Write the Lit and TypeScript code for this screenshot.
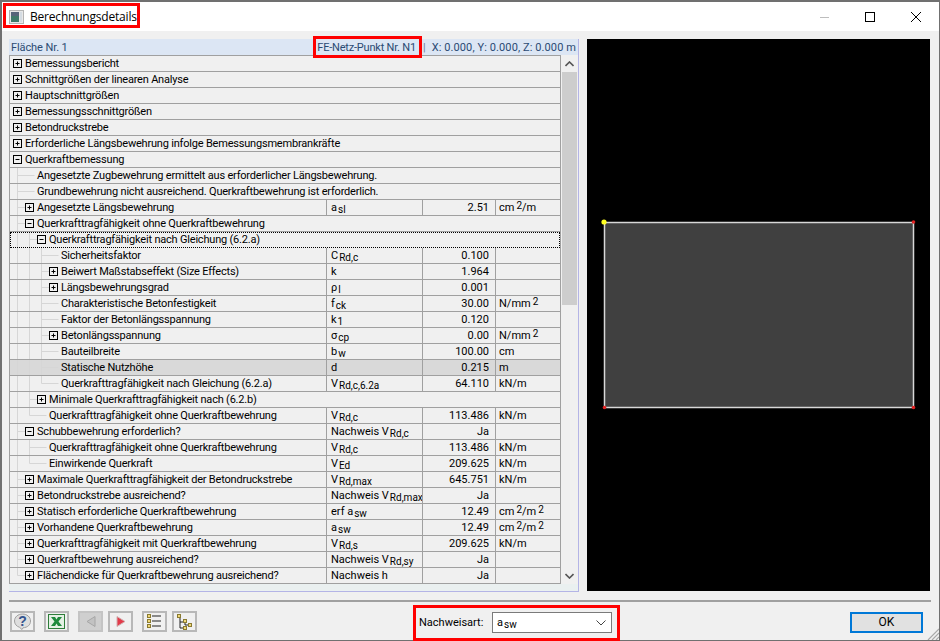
import { LitElement, html, css, svg, nothing } from "lit";
import { customElement } from "lit/decorators.js";

type Row = { l: number; t: string; e?: "+" | "-"; s?: string; sub?: string; v?: string; u?: any; hi?: boolean; focus?: boolean };

const cm2m = html`cm<sup>2</sup>/m`;
const cm2m2 = html`cm<sup>2</sup>/m<sup>2</sup>`;
const nmm2 = html`N/mm<sup>2</sup>`;

const ROWS: Row[] = [
  { l: 0, e: "+", t: "Bemessungsbericht" },
  { l: 0, e: "+", t: "Schnittgrößen der linearen Analyse" },
  { l: 0, e: "+", t: "Hauptschnittgrößen" },
  { l: 0, e: "+", t: "Bemessungsschnittgrößen" },
  { l: 0, e: "+", t: "Betondruckstrebe" },
  { l: 0, e: "+", t: "Erforderliche Längsbewehrung infolge Bemessungsmembrankräfte" },
  { l: 0, e: "-", t: "Querkraftbemessung" },
  { l: 1, t: "Angesetzte Zugbewehrung ermittelt aus erforderlicher Längsbewehrung." },
  { l: 1, t: "Grundbewehrung nicht ausreichend. Querkraftbewehrung ist erforderlich." },
  { l: 1, e: "+", t: "Angesetzte Längsbewehrung", s: "a", sub: "sl", v: "2.51", u: cm2m },
  { l: 1, e: "-", t: "Querkrafttragfähigkeit ohne Querkraftbewehrung" },
  { l: 2, e: "-", t: "Querkrafttragfähigkeit nach Gleichung (6.2.a)", focus: true },
  { l: 3, t: "Sicherheitsfaktor", s: "C", sub: "Rd,c", v: "0.100" },
  { l: 3, e: "+", t: "Beiwert Maßstabseffekt (Size Effects)", s: "k", v: "1.964" },
  { l: 3, e: "+", t: "Längsbewehrungsgrad", s: "ρ", sub: "l", v: "0.001" },
  { l: 3, t: "Charakteristische Betonfestigkeit", s: "f", sub: "ck", v: "30.00", u: nmm2 },
  { l: 3, t: "Faktor der Betonlängsspannung", s: "k", sub: "1", v: "0.120" },
  { l: 3, e: "+", t: "Betonlängsspannung", s: "σ", sub: "cp", v: "0.00", u: nmm2 },
  { l: 3, t: "Bauteilbreite", s: "b", sub: "w", v: "100.00", u: "cm" },
  { l: 3, t: "Statische Nutzhöhe", s: "d", v: "0.215", u: "m", hi: true },
  { l: 3, t: "Querkrafttragfähigkeit nach Gleichung (6.2.a)", s: "V", sub: "Rd,c,6.2a", v: "64.110", u: "kN/m" },
  { l: 2, e: "+", t: "Minimale Querkrafttragfähigkeit nach (6.2.b)" },
  { l: 2, t: "Querkrafttragfähigkeit ohne Querkraftbewehrung", s: "V", sub: "Rd,c", v: "113.486", u: "kN/m" },
  { l: 1, e: "-", t: "Schubbewehrung erforderlich?", s: "Nachweis V", sub: "Rd,c", v: "Ja" },
  { l: 2, t: "Querkrafttragfähigkeit ohne Querkraftbewehrung", s: "V", sub: "Rd,c", v: "113.486", u: "kN/m" },
  { l: 2, t: "Einwirkende Querkraft", s: "V", sub: "Ed", v: "209.625", u: "kN/m" },
  { l: 1, e: "+", t: "Maximale Querkrafttragfähigkeit der Betondruckstrebe", s: "V", sub: "Rd,max", v: "645.751", u: "kN/m" },
  { l: 1, e: "+", t: "Betondruckstrebe ausreichend?", s: "Nachweis V", sub: "Rd,max", v: "Ja" },
  { l: 1, e: "+", t: "Statisch erforderliche Querkraftbewehrung", s: "erf a", sub: "sw", v: "12.49", u: cm2m2 },
  { l: 1, e: "+", t: "Vorhandene Querkraftbewehrung", s: "a", sub: "sw", v: "12.49", u: cm2m2 },
  { l: 1, e: "+", t: "Querkrafttragfähigkeit mit Querkraftbewehrung", s: "V", sub: "Rd,s", v: "209.625", u: "kN/m" },
  { l: 1, e: "+", t: "Querkraftbewehrung ausreichend?", s: "Nachweis V", sub: "Rd,sy", v: "Ja" },
  { l: 1, e: "+", t: "Flächendicke für Querkraftbewehrung ausreichend?", s: "Nachweis h", v: "Ja" },
];

function continues(i: number, k: number): boolean {
  for (let j = i + 1; j < ROWS.length; j++) {
    if (ROWS[j].l <= k) return false;
    if (ROWS[j].l === k + 1) return true;
  }
  return false;
}

function treeGlyph(i: number) {
  const r = ROWS[i];
  const w = 15 + 12 * r.l;
  const cx = 7.5 + 12 * r.l;
  const cy = 7.5;
  const parts: unknown[] = [];
  for (let k = 0; k < r.l; k++) {
    const x = 7.5 + 12 * k;
    const c = continues(i, k);
    if (c) parts.push(svg`<line x1=${x} x2=${x} y1="0" y2="15" stroke="#d6d6d6"/>`);
    else if (k === r.l - 1) parts.push(svg`<line x1=${x} x2=${x} y1="0" y2=${cy} stroke="#d6d6d6"/>`);
  }
  if (r.l > 0) {
    const end = r.e ? cx - 4 : cx + 5;
    parts.push(svg`<line x1=${cx - 12} x2=${end} y1=${cy} y2=${cy} stroke="#d6d6d6"/>`);
  }
  if (r.e) {
    parts.push(svg`<rect x=${cx - 4} y=${cy - 4} width="8" height="8" fill="#f0f0f0" stroke="#000"/>`);
    parts.push(svg`<line x1=${cx - 2} x2=${cx + 2} y1=${cy} y2=${cy} stroke="#000"/>`);
    if (r.e === "+") parts.push(svg`<line x1=${cx} x2=${cx} y1=${cy - 2} y2=${cy + 2} stroke="#000"/>`);
  }
  return html`<svg class="glyph" width=${w} height="15" viewBox="0 0 ${w} 15">${parts}</svg>`;
}

@customElement("app-root")
export class AppRoot extends LitElement {
  static styles = css`
    :host { display: block; width: 940px; height: 641px; font-family: Roboto, "Liberation Sans", Arial, sans-serif; font-size: 11px; color: #000; }
    .window { box-sizing: border-box; width: 940px; height: 641px; border: 1px solid #707070; border-left-width: 2px; border-top-width: 2px; background: #f0f0f0; display: flex; flex-direction: column; position: relative; }
    .titlebar { height: 29px; flex: none; background: #fff; display: flex; align-items: center; }
    .ticon { margin-left: 7px; margin-right: 6px; flex: none; }
    .ttext { font-family: "Open Sans", sans-serif; font-size: 12px; letter-spacing: -0.2px; }
    .winbtns { margin-left: auto; display: flex; align-items: center; }
    .winbtn { width: 46px; height: 29px; display: flex; align-items: center; justify-content: center; }
    .main { flex: none; height: 553px; margin-top: 8px; display: flex; gap: 8px; padding-left: 7px; }
    .panel { width: 570px; flex: none; box-sizing: border-box; border-right: 1px solid #b4b4e6; border-bottom: 1px solid #b4b4e6; background: #eaf0f0; display: flex; flex-direction: column; }
    .phead { height: 16px; flex: none; background: #dce6f4; color: #2b4a73; display: flex; align-items: center; padding: 0 2px; white-space: pre; }
    .phead .left { letter-spacing: -0.1px; }
    .phead .right { margin-left: auto; letter-spacing: -0.2px; }
    .phead .sep { color: #6d7c92; margin: 0 6px 0 7px; }
    .phead .coords { letter-spacing: 0.1px; }
    .grid { display: flex; height: 529px; flex: none; background: #f0f0f0; }
    .table { width: 552px; flex: none; box-sizing: border-box; border: 1px solid #a0a0a0; border-bottom: 0; }
    .row { height: 16px; box-sizing: border-box; border-bottom: 1px solid #a0a0a0; display: grid; grid-template-columns: 317px 96px 73px 64px; white-space: nowrap; line-height: 15px; }
    .row.span { display: flex; }
    .row.hi { background: #d9d9d9; }
    .row.focus { outline: 1px dotted #000; outline-offset: -1px; border-bottom-color: transparent; }
    .cell { box-sizing: border-box; height: 15px; border-right: 1px solid #a0a0a0; }
    .cell:last-child { border-right: 0; }
    .tree { display: flex; align-items: flex-start; border-right: 1px solid #a0a0a0; letter-spacing: -0.2px; }
    .row.span .tree { border-right: 0; flex: 1; }
    .glyph { flex: none; display: block; }
    .sym { padding-left: 4px; overflow: hidden; }
    .sym sub, .combo sub { font-size: 10px; vertical-align: baseline; position: relative; top: 2px; margin-left: 1px; line-height: 0; }
    .val { text-align: right; padding-right: 6px; }
    .unit { padding-left: 3px; }
    sup { font-size: 10px; vertical-align: baseline; position: relative; top: -2px; margin-left: 2px; line-height: 0; }
    .scroll { width: 17px; flex: none; box-sizing: border-box; display: flex; flex-direction: column; align-items: stretch; padding: 0 1px; }
    .arrow { height: 17px; flex: none; display: flex; align-items: center; justify-content: center; }
    .thumb { height: 233px; flex: none; background: #cdcdcd; }
    .track { flex: 1; }
    .canvas { width: 343px; height: 552px; flex: none; background: #000; display: block; }
    .rule { flex: none; margin: 8px 8px 0 7px; border-top: 2px solid #a0a0a0; height: 0; }
    .footer { flex: 1; display: flex; align-items: flex-start; padding: 9px 16px 0 8px; position: relative; }
    .tools { display: flex; gap: 9px; }
    .tbtn { box-sizing: border-box; width: 25px; height: 21px; border: 2px solid #b8b8b8; background: #f0f0f0; display: flex; align-items: center; justify-content: center; }
    .tbtn.off { background: #cfcfcf; border-color: #c4c4c4; }
    .group { display: flex; gap: 5px; }
    .nach { margin-left: 222px; display: flex; align-items: center; height: 21px; margin-top: 1px; }
    .nach .label { width: 73px; flex: none; }
    .combo { box-sizing: border-box; width: 120px; height: 21px; border: 1px solid #7a7a7a; background: #fff; display: flex; align-items: center; padding: 0 5px 0 4px; line-height: 15px; }
    .combo svg { margin-left: auto; }
    .ok { box-sizing: border-box; margin-left: auto; width: 73px; height: 21px; margin-top: 1px; border: 2px solid #0078d7; background: #e1e1e1; text-align: center; line-height: 17px; font-size: 12px; }
    .grip { position: absolute; right: 0; bottom: 0; display: block; }
    .red { position: absolute; box-sizing: border-box; border: 3px solid #f00; pointer-events: none; }
    .red.a { left: 1px; top: 1px; width: 137px; height: 25px; }
    .red.b { left: 311px; top: 34px; width: 109px; height: 22px; }
    .red.c { left: 411px; top: 603px; width: 207px; height: 36px; }
  `;

  private renderRow(r: Row, i: number) {
    const cls = `row ${r.s || r.v ? "" : "span"} ${r.hi ? "hi" : ""} ${r.focus ? "focus" : ""}`;
    const tree = html`<div class="cell tree">${treeGlyph(i)}<span>${r.t}</span></div>`;
    if (!r.s && !r.v) return html`<div class=${cls}>${tree}</div>`;
    return html`<div class=${cls}>
      ${tree}
      <div class="cell sym">${r.s}${r.sub ? html`<sub>${r.sub}</sub>` : nothing}</div>
      <div class="cell val">${r.v}</div>
      <div class="cell unit">${r.u ?? ""}</div>
    </div>`;
  }

  render() {
    return html`<div class="window">
      <div class="titlebar">
        <svg class="ticon" width="15" height="14" viewBox="0 0 15 14">
          <rect x="0.5" y="0.5" width="14" height="13" fill="#e8e8e8" stroke="#b4b4b4"/>
          <rect x="2" y="2" width="8" height="10" fill="#3f7a6a"/>
          <rect x="2" y="2" width="8" height="4" fill="#56657a"/>
          <rect x="11" y="2" width="2" height="10" fill="#d4dbe2"/>
        </svg>
        <span class="ttext">Berechnungsdetails</span>
        <div class="winbtns">
          <div class="winbtn"><svg width="10" height="10"><line x1="1" x2="11" y1="5.5" y2="5.5" stroke="#bdbdbd"/></svg></div>
          <div class="winbtn"><svg width="10" height="10"><rect x="0.5" y="0.5" width="9" height="9" fill="none" stroke="#000"/></svg></div>
          <div class="winbtn"><svg width="10" height="10"><path d="M0 0L10 10M10 0L0 10" stroke="#000" fill="none"/></svg></div>
        </div>
      </div>
      <div class="main">
        <div class="panel">
          <div class="phead"><span class="left">Fläche Nr. 1</span><span class="right">FE-Netz-Punkt Nr. N1</span><span class="sep">|</span><span class="coords">X: 0.000, Y: 0.000, Z: 0.000 m</span></div>
          <div class="grid">
            <div class="table">${ROWS.map((r, i) => this.renderRow(r, i))}</div>
            <div class="scroll">
              <div class="arrow"><svg width="9" height="6"><path d="M0.5 5L4.5 1L8.5 5" fill="none" stroke="#555" stroke-width="1.6"/></svg></div>
              <div class="thumb"></div>
              <div class="track"></div>
              <div class="arrow"><svg width="9" height="6"><path d="M0.5 1L4.5 5L8.5 1" fill="none" stroke="#555" stroke-width="1.6"/></svg></div>
            </div>
          </div>
        </div>
        <svg class="canvas" viewBox="0 0 343 552">
          <rect x="17.5" y="183.5" width="309" height="185" fill="#404040" stroke="#d8d8d8" stroke-width="1.5"/>
          <circle cx="17" cy="183" r="2.6" fill="#ffff20"/>
          <circle cx="326.5" cy="183" r="1.8" fill="#e02020"/>
          <circle cx="17.5" cy="368.5" r="1.8" fill="#e02020"/>
          <circle cx="326.5" cy="368.5" r="1.8" fill="#e02020"/>
        </svg>
      </div>
      <div class="rule"></div>
      <div class="footer">
        <div class="tools">
          <div class="tbtn"><svg width="19" height="17" viewBox="0 0 19 17">
            <path d="M9.5 1C5 1 1.5 4 1.5 8C1.5 11 3.500 13.300 6.500 14.300L9 16.500L10 14.800C14.500 14.500 17.500 12 17.500 8C17.500 4 14 1 9.500 1Z" fill="#dedede" stroke="#a0a0a0"/>
            <text x="9.5" y="13" text-anchor="middle" font-family="Liberation Sans" font-weight="700" font-size="14" fill="#34558f">?</text>
          </svg></div>
          <div class="tbtn"><svg width="17" height="15" viewBox="0 0 17 15">
            <rect x="0.5" y="0.5" width="16" height="14" fill="#e4f0e4" stroke="#2e7d3a"/>
            <path d="M3 3L7 3L8.500 5.500L10 3L14 3L10.500 7.500L14 12L10 12L8.500 9.500L7 12L3 12L6.500 7.500Z" fill="#1f8a3c"/>
          </svg></div>
          <div class="group">
            <div class="tbtn off"><svg width="10" height="11" viewBox="0 0 10 11"><path d="M9 0.5V10.500L1 5.500Z" fill="#c2c2c2" stroke="#a6a6a6"/></svg></div>
            <div class="tbtn"><svg width="10" height="11" viewBox="0 0 10 11"><path d="M1 0.5V10.500L9 5.500Z" fill="#e23a4a" stroke="#d0b0b0"/></svg></div>
          </div>
          <div class="group">
            <div class="tbtn"><svg width="15" height="15" viewBox="0 0 15 15">
              <g fill="#f0d878" stroke="#8a7a30"><rect x="0.5" y="0.5" width="3" height="3"/><rect x="0.5" y="5.500" width="3" height="3"/><rect x="0.5" y="10.500" width="3" height="3"/></g>
              <path d="M5 2H14M5 7H14M5 12H14" stroke="#222" stroke-width="1.2"/>
            </svg></div>
            <div class="tbtn"><svg width="17" height="16" viewBox="0 0 17 16">
              <path d="M4 3V14H8M4 8H9M9 8V11H12" fill="none" stroke="#222"/>
              <g fill="#f0d878" stroke="#8a7a30"><rect x="1.5" y="0.5" width="3" height="3"/><rect x="7.500" y="5.500" width="3" height="3"/><rect x="12.500" y="9.500" width="3" height="3"/><rect x="7.500" y="12.500" width="3" height="3"/></g>
            </svg></div>
          </div>
        </div>
        <div class="nach">
          <span class="label">Nachweisart:</span>
          <div class="combo"><span>a<sub>sw</sub></span><svg width="10" height="6"><path d="M0.5 0.5L5 5L9.5 0.5" fill="none" stroke="#444"/></svg></div>
        </div>
        <div class="ok">OK</div>
        <svg class="grip" width="12" height="12" viewBox="0 0 12 12"><path d="M12 1L1 12M12 5L5 12M12 9L9 12" stroke="#a8a8a8" stroke-width="1.2"/></svg>
      </div>
      <div class="red a"></div>
      <div class="red b"></div>
      <div class="red c"></div>
    </div>`;
  }
}
